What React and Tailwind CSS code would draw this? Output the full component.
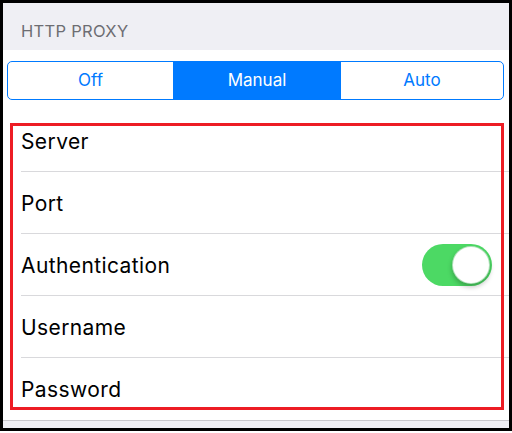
import React from 'react';

const rows = ['Server', 'Port', 'Authentication', 'Username', 'Password'];

const Toggle = () => (
  <div className="relative w-[70px] h-[42px] rounded-full bg-[#4cd964]">
    <div className="absolute right-[2px] top-[2px] w-[38px] h-[38px] rounded-full bg-white shadow-[0_3px_5px_rgba(0,0,0,0.25)] border border-[#3bb552]/40" />
  </div>
);

const App = () => {
  return (
    <div className="w-[512px] h-[433px] bg-white" style={{ fontFamily: 'Inter, "Liberation Sans", Arial, sans-serif' }}>
      <div className="relative h-[431px] border-[3px] border-black flex flex-col bg-[#efeff4]">
        {/* Section header */}
        <div className="h-[47px] pl-[18px] pt-[9px] flex items-center text-[16.5px] text-[#6d6d72] tracking-[0.3px]">
          HTTP PROXY
        </div>

        <div className="bg-white border-b border-[#c8c7cc]">
          {/* Segmented control */}
          <div className="pt-[11px] pl-[4px] pr-[5px]">
            <div className="flex h-[39px] border border-[#007aff] rounded-[5px] overflow-hidden text-[17px]">
              <div className="w-[165px] flex items-center justify-center pt-[1px] text-[#007aff]">Off</div>
              <div className="w-[168px] flex items-center justify-center pt-[1px] bg-[#007aff] text-white">Manual</div>
              <div className="flex-1 flex items-center justify-center pt-[1px] text-[#007aff]">Auto</div>
            </div>
          </div>

          {/* Rows */}
          <div className="mt-[10px] pl-[18px]">
            {rows.map((label, i) => (
              <div
                key={label}
                className={`h-[62px] flex items-center justify-between pr-[17px] text-[21px] tracking-[0.4px] text-black ${
                  i < rows.length - 1 ? 'border-b border-[#d9d9dc]' : ''
                }`}
              >
                <span className="pt-[2px]">{label}</span>
                {label === 'Authentication' && <Toggle />}
              </div>
            ))}
          </div>
        </div>

        {/* Annotation box */}
        <div className="absolute left-[7px] top-[120px] w-[494px] h-[287px] border-[3px] border-[#ed1c24] pointer-events-none" />
      </div>
    </div>
  );
};

export default App;
